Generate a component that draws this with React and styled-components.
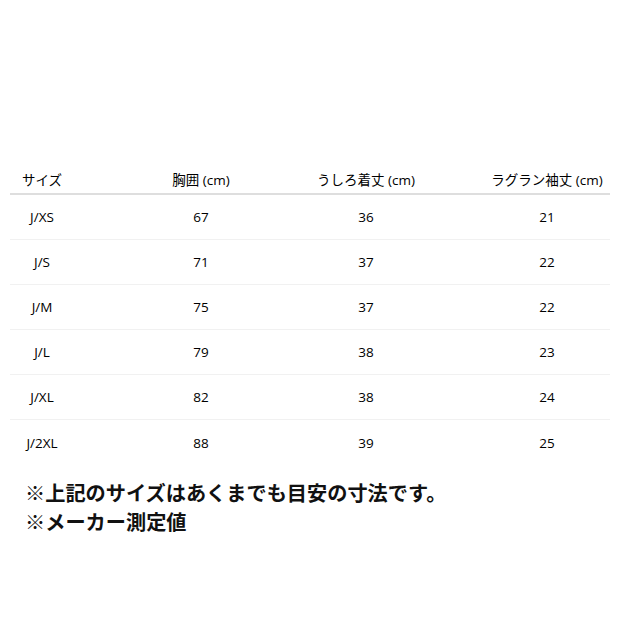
import React from "react";
import styled, { createGlobalStyle } from "styled-components";

const GlobalStyle = createGlobalStyle`
    html, body {
        margin: 0;
        padding: 0;
        background: #ffffff;
    }
    body {
        font-family: "Open Sans", "Noto Sans CJK JP", sans-serif;
        color: #111;
    }
`;

const Page = styled.div`
    width: 620px;
    height: 620px;
    padding: 151px 10px 0 10px;
    box-sizing: border-box;
`;

const Table = styled.div`
    display: flex;
    flex-direction: column;
    width: 600px;
`;

// column centers fall at 32 / 191 / 356 / 537 from the table's left edge
const Row = styled.div`
    display: grid;
    grid-template-columns: 64px 94px 76px 126px;
    column-gap: 80px;
    height: ${(p) => (p.$head ? "44px" : "45px")};
    border-bottom: ${(p) =>
        p.$head ? "2px solid #dedede" : p.$last ? "none" : "1px solid #f1f1f1"};
    box-sizing: border-box;
`;

const Cell = styled.div`
    display: flex;
    justify-content: center;
    align-items: center;
    white-space: nowrap;
    font-size: 13.5px;
    color: #000;
    padding-top: ${(p) => (p.$head ? "14px" : "0")};
`;

const Notes = styled.div`
    margin-top: 13px;
    padding-left: 15px;
    font-family: "Noto Sans CJK JP", sans-serif;
    font-weight: 700;
    font-size: 20.2px;
    line-height: 29px;
    color: #111;
`;

const headers = ["サイズ", "胸囲 (cm)", "うしろ着丈 (cm)", "ラグラン袖丈 (cm)"];

const sizes = [
    ["J/XS", 67, 36, 21],
    ["J/S", 71, 37, 22],
    ["J/M", 75, 37, 22],
    ["J/L", 79, 38, 23],
    ["J/XL", 82, 38, 24],
    ["J/2XL", 88, 39, 25],
];

const App = () => {
    return (
        <Page>
            <GlobalStyle />
            <Table>
                <Row $head>
                    {headers.map((h) => (
                        <Cell $head key={h}>
                            {h}
                        </Cell>
                    ))}
                </Row>
                {sizes.map((row, i) => (
                    <Row key={row[0]} $last={i === sizes.length - 1}>
                        {row.map((v, j) => (
                            <Cell key={j}>{v}</Cell>
                        ))}
                    </Row>
                ))}
            </Table>
            <Notes>
                <div>※上記のサイズはあくまでも目安の寸法です。</div>
                <div>※メーカー測定値</div>
            </Notes>
        </Page>
    );
};

export default App;
